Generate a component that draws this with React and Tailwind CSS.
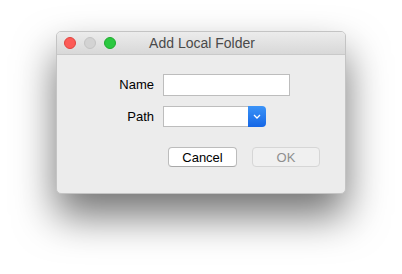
import React from 'react';

const App = () => {
    return (
        <div className="w-[402px] h-[274px] bg-white overflow-hidden pt-[31px] pl-[56px]" style={{ fontFamily: '"Liberation Sans", Arial, sans-serif' }}>
            <div className="w-[290px] h-[163px] rounded-[5px] bg-[#ececec] border border-[#c4c4c4] shadow-[0_22px_40px_rgba(0,0,0,0.55)] flex flex-col overflow-hidden">
                {/* title bar */}
                <div className="h-[23px] shrink-0 flex items-center border-b border-[#c9c9c9] bg-gradient-to-b from-[#ececec] to-[#d8d8d8] relative">
                    <div className="flex items-center gap-[8px] pl-[7px]">
                        <span className="w-[12px] h-[12px] rounded-full bg-[#fc5b57] border border-[#e0443e]" />
                        <span className="w-[12px] h-[12px] rounded-full bg-[#d3d3d3] border border-[#c4c4c4]" />
                        <span className="w-[12px] h-[12px] rounded-full bg-[#2bc840] border border-[#1eab2d]" />
                    </div>
                    <div className="absolute inset-0 flex items-center justify-center pl-[2px] text-[14px] text-[#4a4a4a] pointer-events-none">
                        Add Local Folder
                    </div>
                </div>

                {/* body */}
                <div className="flex flex-col pt-[19px]">
                    <div className="flex flex-col gap-[10px] pl-[37px]">
                        <div className="flex items-center gap-[9px]">
                            <span className="w-[60px] text-right text-[13px] text-black">Name</span>
                            <div className="w-[127px] h-[22px] bg-white border border-[#bdbdbd]" />
                        </div>
                        <div className="flex items-center gap-[9px]">
                            <span className="w-[60px] text-right text-[13px] text-black">Path</span>
                            <div className="w-[103px] h-[21px] flex">
                                <div className="flex-1 bg-white border border-[#bdbdbd] border-r-0" />
                                <div className="w-[18px] rounded-r-[4px] bg-gradient-to-b from-[#3b93f7] to-[#1566e6] flex items-center justify-center">
                                    <svg width="8" height="5" viewBox="0 0 8 5">
                                        <path d="M1 1 L4 4 L7 1" fill="none" stroke="white" strokeWidth="1.3" />
                                    </svg>
                                </div>
                            </div>
                        </div>
                    </div>

                    <div className="flex justify-end gap-[15px] pr-[25px] mt-[20px]">
                        <button className="w-[69px] h-[20px] rounded-[4px] bg-white border border-[#bcbcbc] border-b-[#a8a8a8] text-[13px] text-black leading-none">
                            Cancel
                        </button>
                        <button className="w-[68px] h-[20px] rounded-[4px] bg-[#f0f0f0] border border-[#d6d6d6] text-[13px] text-[#8e8e8e] leading-none">
                            OK
                        </button>
                    </div>
                </div>
            </div>
        </div>
    );
};

export default App;
